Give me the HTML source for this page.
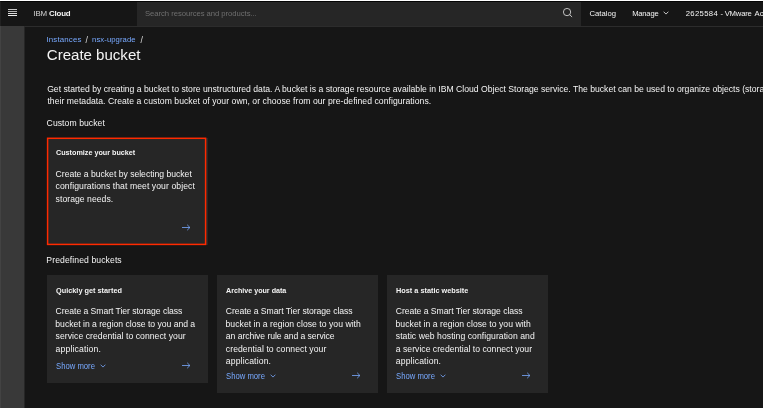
<!DOCTYPE html>
<html lang="en">
<head>
<meta charset="utf-8">
<title>Create bucket - IBM Cloud</title>
<style>
*{box-sizing:border-box;margin:0;padding:0}
html,body{width:763px;height:408px;overflow:hidden;background:#161616}
body{position:relative;font-family:"Liberation Sans",sans-serif;color:#f4f4f4}
.abs{position:absolute;white-space:nowrap}
.t{line-height:1;font-weight:normal}
#root{left:0;top:0;width:763px;height:408px;will-change:transform}
#topline{left:0;top:0;width:763px;height:2px;background:#050505;border-top:1px solid #fff}
#leftline{left:0;top:1px;width:1px;height:407px;background:rgba(255,255,255,0.05)}
#header{left:0;top:1px;width:763px;height:26px;background:#161616;border-bottom:1px solid #2c2c2c}
#search{left:137px;top:1px;width:444px;height:25px;background:#262626}
#sidebar{left:0;top:26px;width:24px;height:382px;background:#393939}
.hb{left:8px;width:9px;height:1px;background:#f4f4f4}
.card{background:#262626}
</style>
</head>
<body>
<div class="abs" id="root">
<div class="abs" id="header"></div>
<div class="abs" id="search"></div>
<div class="abs" id="topline"></div>
<div class="abs" id="sidebar"></div>
<div class="abs" id="leftline"></div>
<div class="abs" id="sideedge" style="left:24px;top:27px;width:1px;height:381px;background:#262626"></div>
<div class="abs hb" style="top:9px;background:#c8c8c8"></div>
<div class="abs hb" style="top:11px;background:#b4b4b4"></div>
<div class="abs hb" style="top:13px;background:#dcdcdc"></div>
<div class="abs hb" style="top:15px;background:#ececec"></div>
<svg class="abs" id="sicon" style="left:560px;top:5px" width="15" height="15" viewBox="560 5 15 15" fill="none" stroke="#e6e6e6" stroke-width="0.8"><circle cx="567.05" cy="12.05" r="3.65"/><path d="M569.7 14.7L572.1 17.0"/></svg>

<svg class="abs" id="mchev" style="left:663.20px;top:11.30px" width="6" height="4" viewBox="0 0 6 4" fill="none" stroke="#f4f4f4" stroke-width="0.8"><path d="M0.6 0.7L3 3.1L5.4 0.7"/></svg>
<div class="abs card" id="c0" style="left:46.5px;top:137.5px;width:161.5px;height:107.5px"></div>
<svg class="abs" id="redbox" style="left:44px;top:135px" width="166" height="113" viewBox="44 135 166 113" fill="none"><rect x="47.6" y="138.3" width="158" height="106.1" stroke="#ff2a00" stroke-width="1.5"/></svg>
<div class="abs card" id="c1" style="left:46.5px;top:275px;width:161.5px;height:107.7px"></div>
<div class="abs card" id="c2" style="left:216.5px;top:275px;width:161.5px;height:117.8px"></div>
<div class="abs card" id="c3" style="left:386.8px;top:275px;width:161.5px;height:117.8px"></div>
<div class="abs t" id="brand" style="left:33.35px;top:10.00px;font-size:7.9px;font-weight:normal;color:#f4f4f4;letter-spacing:-0.156px"><span style="color:#d4d4d4">IBM</span> <b>Cloud</b></div>
<div class="abs t" id="stext" style="left:145.00px;top:10.00px;font-size:7.7px;font-weight:normal;color:#6f6f6f;letter-spacing:-0.048px">Search resources and products...</div>
<div class="abs t" id="catalog" style="left:589.45px;top:10.00px;font-size:7.7px;font-weight:normal;color:#f4f4f4;letter-spacing:-0.000px">Catalog</div>
<div class="abs t" id="manage" style="left:632.20px;top:10.00px;font-size:7.6px;font-weight:normal;color:#f4f4f4;letter-spacing:-0.200px">Manage</div>
<div class="abs t" id="acct1" style="left:685.75px;top:10.00px;font-size:7.7px;font-weight:normal;color:#f4f4f4;letter-spacing:0.333px">2625584</div>
<div class="abs t" id="acct2" style="left:720.40px;top:10.00px;font-size:7.7px;font-weight:normal;color:#f4f4f4;letter-spacing:0.000px">-</div>
<div class="abs t" id="acct3" style="left:724.70px;top:10.00px;font-size:7.7px;font-weight:normal;color:#f4f4f4;letter-spacing:-0.200px">VMware</div>
<div class="abs t" id="acct4" style="left:754.60px;top:10.00px;font-size:7.7px;font-weight:normal;color:#f4f4f4;letter-spacing:0.000px">Account</div>
<div class="abs t" id="bc1" style="left:46.45px;top:36.00px;font-size:7.9px;font-weight:normal;color:#78a9ff;letter-spacing:0.156px">Instances</div>
<div class="abs t" id="bc2" style="left:85.40px;top:36.00px;font-size:8.8px;font-weight:normal;color:#dcdcdc;letter-spacing:0.000px">/</div>
<div class="abs t" id="bc3" style="left:92.10px;top:36.00px;font-size:7.7px;font-weight:normal;color:#78a9ff;letter-spacing:0.075px">nsx-upgrade</div>
<div class="abs t" id="bc4" style="left:140.60px;top:36.00px;font-size:8.8px;font-weight:normal;color:#dcdcdc;letter-spacing:0.000px">/</div>
<h1 class="abs t" id="title" style="left:46.75px;top:47.00px;font-size:15.1px;font-weight:normal;color:#f4f4f4;letter-spacing:-0.021px">Create bucket</h1>
<p class="abs t" id="p1" style="left:47.15px;top:85.00px;font-size:8.65px;font-weight:normal;color:#f4f4f4;letter-spacing:0.000px">Get started by creating a bucket to store unstructured data. A bucket is a storage resource available in IBM Cloud Object Storage service. The bucket can be used to organize objects (storage of files) and</p>
<p class="abs t" id="p2" style="left:47.40px;top:97.00px;font-size:8.65px;font-weight:normal;color:#f4f4f4;letter-spacing:0.042px">their metadata. Create a custom bucket of your own, or choose from our pre-defined configurations.</p>
<div class="abs t" id="h_custom" style="left:46.60px;top:119.00px;font-size:8.65px;font-weight:normal;color:#f4f4f4;letter-spacing:0.062px">Custom bucket</div>
<div class="abs t" id="c0t" style="left:56.00px;top:149.00px;font-size:8.0px;font-weight:bold;color:#f4f4f4;letter-spacing:0.000px;transform:scaleX(0.9000);transform-origin:0 0">Customize your bucket</div>
<div class="abs t" id="c0l1" style="left:55.60px;top:170.00px;font-size:8.65px;font-weight:normal;color:#f4f4f4;letter-spacing:-0.013px">Create a bucket by selecting bucket</div>
<div class="abs t" id="c0l2" style="left:55.60px;top:182.00px;font-size:8.65px;font-weight:normal;color:#f4f4f4;letter-spacing:0.073px">configurations that meet your object</div>
<div class="abs t" id="c0l3" style="left:55.60px;top:195.00px;font-size:8.65px;font-weight:normal;color:#f4f4f4;letter-spacing:0.042px">storage needs.</div>
<div class="abs t" id="h_pre" style="left:46.35px;top:256.00px;font-size:8.65px;font-weight:normal;color:#f4f4f4;letter-spacing:0.088px">Predefined buckets</div>
<div class="abs t" id="c1t" style="left:56.00px;top:287.00px;font-size:8.0px;font-weight:bold;color:#f4f4f4;letter-spacing:0.000px;transform:scaleX(0.9158);transform-origin:0 0">Quickly get started</div>
<div class="abs t" id="c1l1" style="left:55.60px;top:307.00px;font-size:8.65px;font-weight:normal;color:#f4f4f4;letter-spacing:-0.053px">Create a Smart Tier storage class</div>
<div class="abs t" id="c1l2" style="left:55.35px;top:320.00px;font-size:8.65px;font-weight:normal;color:#f4f4f4;letter-spacing:-0.019px">bucket in a region close to you and a</div>
<div class="abs t" id="c1l3" style="left:55.60px;top:332.00px;font-size:8.65px;font-weight:normal;color:#f4f4f4;letter-spacing:0.047px">service credential to connect your</div>
<div class="abs t" id="c1l4" style="left:55.60px;top:345.00px;font-size:8.65px;font-weight:normal;color:#f4f4f4;letter-spacing:0.141px">application.</div>
<div class="abs t" id="c1s" style="left:56.00px;top:362.00px;font-size:8.4px;font-weight:normal;color:#78a9ff;letter-spacing:0.000px;transform:scaleX(0.9193);transform-origin:0 0">Show more</div>
<div class="abs t" id="c2t" style="left:226.00px;top:287.00px;font-size:8.0px;font-weight:bold;color:#f4f4f4;letter-spacing:0.000px;transform:scaleX(0.8926);transform-origin:0 0">Archive your data</div>
<div class="abs t" id="c2l1" style="left:225.80px;top:307.00px;font-size:8.65px;font-weight:normal;color:#f4f4f4;letter-spacing:-0.053px">Create a Smart Tier storage class</div>
<div class="abs t" id="c2l2" style="left:225.55px;top:320.00px;font-size:8.65px;font-weight:normal;color:#f4f4f4;letter-spacing:0.030px">bucket in a region close to you with</div>
<div class="abs t" id="c2l3" style="left:225.80px;top:332.00px;font-size:8.65px;font-weight:normal;color:#f4f4f4;letter-spacing:-0.052px">an archive rule and a service</div>
<div class="abs t" id="c2l4" style="left:225.80px;top:345.00px;font-size:8.65px;font-weight:normal;color:#f4f4f4;letter-spacing:0.072px">credential to connect your</div>
<div class="abs t" id="c2l5" style="left:225.80px;top:357.00px;font-size:8.65px;font-weight:normal;color:#f4f4f4;letter-spacing:0.141px">application.</div>
<div class="abs t" id="c2s" style="left:226.00px;top:372.00px;font-size:8.4px;font-weight:normal;color:#78a9ff;letter-spacing:0.000px;transform:scaleX(0.9193);transform-origin:0 0">Show more</div>
<div class="abs t" id="c3t" style="left:396.00px;top:287.00px;font-size:8.0px;font-weight:bold;color:#f4f4f4;letter-spacing:0.000px;transform:scaleX(0.9140);transform-origin:0 0">Host a static website</div>
<div class="abs t" id="c3l1" style="left:395.80px;top:307.00px;font-size:8.65px;font-weight:normal;color:#f4f4f4;letter-spacing:-0.053px">Create a Smart Tier storage class</div>
<div class="abs t" id="c3l2" style="left:395.55px;top:320.00px;font-size:8.65px;font-weight:normal;color:#f4f4f4;letter-spacing:0.030px">bucket in a region close to you with</div>
<div class="abs t" id="c3l3" style="left:395.80px;top:332.00px;font-size:8.65px;font-weight:normal;color:#f4f4f4;letter-spacing:0.051px">static web hosting configuration and</div>
<div class="abs t" id="c3l4" style="left:395.80px;top:345.00px;font-size:8.65px;font-weight:normal;color:#f4f4f4;letter-spacing:0.016px">a service credential to connect your</div>
<div class="abs t" id="c3l5" style="left:395.80px;top:357.00px;font-size:8.65px;font-weight:normal;color:#f4f4f4;letter-spacing:0.141px">application.</div>
<div class="abs t" id="c3s" style="left:396.00px;top:372.00px;font-size:8.4px;font-weight:normal;color:#78a9ff;letter-spacing:0.000px;transform:scaleX(0.9193);transform-origin:0 0">Show more</div>
<svg class="abs" id="c0a" style="left:182.00px;top:224.20px" width="9" height="7" viewBox="0 0 9 7" fill="none" stroke="#78a9ff" stroke-width="0.8"><path d="M0 3.5H7.9M5.2 0.8L7.95 3.5L5.2 6.2"/></svg>
<svg class="abs" id="c1a" style="left:182.00px;top:362.00px" width="9" height="7" viewBox="0 0 9 7" fill="none" stroke="#78a9ff" stroke-width="0.8"><path d="M0 3.5H7.9M5.2 0.8L7.95 3.5L5.2 6.2"/></svg>
<svg class="abs" id="c1c" style="left:100.10px;top:363.70px" width="6" height="4" viewBox="0 0 6 4" fill="none" stroke="#78a9ff" stroke-width="0.8"><path d="M0.6 0.7L3 3.1L5.4 0.7"/></svg>
<svg class="abs" id="c2a" style="left:352.10px;top:372.20px" width="9" height="7" viewBox="0 0 9 7" fill="none" stroke="#78a9ff" stroke-width="0.8"><path d="M0 3.5H7.9M5.2 0.8L7.95 3.5L5.2 6.2"/></svg>
<svg class="abs" id="c2c" style="left:270.10px;top:373.80px" width="6" height="4" viewBox="0 0 6 4" fill="none" stroke="#78a9ff" stroke-width="0.8"><path d="M0.6 0.7L3 3.1L5.4 0.7"/></svg>
<svg class="abs" id="c3a" style="left:522.10px;top:372.20px" width="9" height="7" viewBox="0 0 9 7" fill="none" stroke="#78a9ff" stroke-width="0.8"><path d="M0 3.5H7.9M5.2 0.8L7.95 3.5L5.2 6.2"/></svg>
<svg class="abs" id="c3c" style="left:440.10px;top:373.80px" width="6" height="4" viewBox="0 0 6 4" fill="none" stroke="#78a9ff" stroke-width="0.8"><path d="M0.6 0.7L3 3.1L5.4 0.7"/></svg>
</div>
</body>
</html>
